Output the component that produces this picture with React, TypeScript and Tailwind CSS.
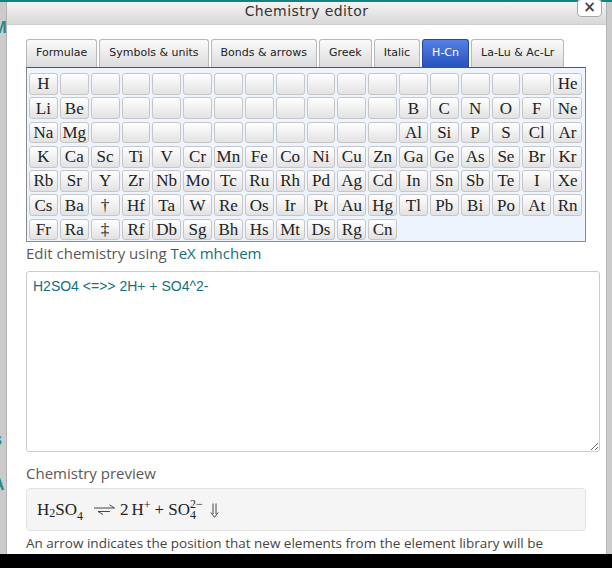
import React from 'react';

const tabs = ['Formulae', 'Symbols & units', 'Bonds & arrows', 'Greek', 'Italic', 'H-Cn', 'La-Lu & Ac-Lr'];

const blank = (n: number) => Array(n).fill('');
const none = (n: number) => Array(n).fill(null);

// null = no button at all, '' = empty button
const rows: (string | null)[][] = [
  ['H', ...blank(16), 'He'],
  ['Li', 'Be', ...blank(10), 'B', 'C', 'N', 'O', 'F', 'Ne'],
  ['Na', 'Mg', ...blank(10), 'Al', 'Si', 'P', 'S', 'Cl', 'Ar'],
  ['K', 'Ca', 'Sc', 'Ti', 'V', 'Cr', 'Mn', 'Fe', 'Co', 'Ni', 'Cu', 'Zn', 'Ga', 'Ge', 'As', 'Se', 'Br', 'Kr'],
  ['Rb', 'Sr', 'Y', 'Zr', 'Nb', 'Mo', 'Tc', 'Ru', 'Rh', 'Pd', 'Ag', 'Cd', 'In', 'Sn', 'Sb', 'Te', 'I', 'Xe'],
  ['Cs', 'Ba', '†', 'Hf', 'Ta', 'W', 'Re', 'Os', 'Ir', 'Pt', 'Au', 'Hg', 'Tl', 'Pb', 'Bi', 'Po', 'At', 'Rn'],
  ['Fr', 'Ra', '‡', 'Rf', 'Db', 'Sg', 'Bh', 'Hs', 'Mt', 'Ds', 'Rg', 'Cn', ...none(6)],
];

function EqArrow() {
  return (
    <svg width="23" height="11" viewBox="0 0 23 11" className="mx-[4px] shrink-0" fill="none" stroke="#333" strokeWidth="0.9">
      <path d="M1 4 H21.5 M21.5 4 L16.5 0.8" />
      <path d="M5 7.5 H17 M5 7.5 L10 10.5" />
    </svg>
  );
}

// ⇓ drawn as in the math preview
function DownDouble() {
  return (
    <svg width="9" height="15" viewBox="0 0 9 15" className="ml-[7px] shrink-0 translate-y-[1px]" fill="none" stroke="#333" strokeWidth="0.9">
      <path d="M3 0.5 V11 M6 0.5 V11" />
      <path d="M0.8 9.5 L4.5 14.3 L8.2 9.5" />
    </svg>
  );
}

function ElementButton({ label }: { label: string | null }) {
  if (label === null) return <div />;
  return (
    <div className="h-[21.7px] rounded-[3px] border border-[#c6c6c6] bg-linear-to-b from-[#ffffff] to-[#e2e2e2] flex items-center justify-center text-[17px] leading-none text-[#222] font-['Liberation_Serif',serif]">
      {label}
    </div>
  );
}

export default function App() {
  return (
    <div className="w-[612px] h-[568px] overflow-hidden flex flex-col bg-[#cbcbcb] font-['Open_Sans',sans-serif]">
      <div className="h-[2px] bg-[#137f86]" />
      <div className="flex flex-1 min-h-0">
        {/* page behind the dialog */}
        <div className="w-[7px] border-r border-[#b3b3b3] overflow-hidden flex flex-col text-[#2a8a90] font-bold text-[16px] leading-[16px]">
          <span className="mt-[17px] -ml-[8px]">M</span>
          <span className="mt-[396px] -ml-[6px]">s</span>
          <span className="mt-[29px] -ml-[7px]">A</span>
        </div>

        <div className="relative flex-1 flex flex-col bg-white">
          <div className="h-[23px] shrink-0 bg-linear-to-b from-[#f4f4f4] to-[#d8d8d8] border-b border-[#cfcfcf] flex justify-center">
            <span className="text-[14px] leading-[18px] tracking-[0.4px] text-[#333] font-['DejaVu_Sans',sans-serif]">
              Chemistry editor
            </span>
          </div>
          <div className="absolute -top-[3px] right-[4px] w-[25px] h-[18px] rounded-[4px] border border-[#a9a9a9] bg-white flex items-end justify-center pb-[1px] text-[15px] leading-none font-bold text-[#444] font-['DejaVu_Sans',sans-serif]">
            ×
          </div>

          <div className="pl-[19px] pr-[6px] flex flex-col">
            <div className="mt-[14px] flex gap-[2px] font-['DejaVu_Sans',sans-serif] text-[11px]">
              {tabs.map((t) =>
                t === 'H-Cn' ? (
                  <div
                    key={t}
                    className="h-[28px] px-[9px] flex items-center rounded-t-[3px] border border-b-0 border-[#2546a6] bg-linear-to-b from-[#5481e3] to-[#2a52bd] text-white"
                  >
                    {t}
                  </div>
                ) : (
                  <div
                    key={t}
                    className="h-[28px] px-[9px] flex items-center rounded-t-[3px] border border-b-0 border-[#b8b8b8] bg-linear-to-b from-[#fbfbfb] to-[#dcdcdc] text-[#222]"
                  >
                    {t}
                  </div>
                )
              )}
            </div>

            <div className="w-[560px] border border-[#8a8a8a] border-t-[#4d5566] bg-[#edf4fe] pt-[5px] pl-[2px] pr-[3px] pb-[1px]">
              <div className="grid grid-cols-[repeat(18,minmax(0,1fr))] gap-x-[2px] gap-y-[2.6px]">
                {rows.flat().map((el, i) => (
                  <ElementButton key={i} label={el} />
                ))}
              </div>
            </div>

            <div className="mt-[1px] text-[15px] leading-[20px] text-[#595959]">
              Edit chemistry using <span className="text-[#0f6f77]">TeX mhchem</span>
            </div>

            <textarea
              readOnly
              value="H2SO4 <=>> 2H+ + SO4^2-"
              className="block mt-[7.5px] w-[574px] h-[181px] rounded-[3px] border border-[#cccccc] bg-white px-[6px] pt-[4px] text-[14px] leading-[20px] text-[#127179] font-['Liberation_Sans',sans-serif] outline-none"
            />

            <div className="mt-[11px] text-[15px] leading-[20px] text-[#595959]">Chemistry preview</div>

            <div className="mt-[5px] w-[560px] h-[43px] rounded-[4px] border border-[#e2e2e2] bg-[#f5f5f5] flex items-center pl-[10px] text-[17px] text-[#222] font-['Liberation_Serif',serif]">
              <span>H</span>
              <span className="text-[12px] translate-y-[4px]">2</span>
              <span>SO</span>
              <span className="text-[12px] translate-y-[7px]">4</span>
              <span className="w-[6px]" />
              <EqArrow />
              <span>2</span>
              <span className="w-[3px]" />
              <span>H</span>
              <span className="text-[12px] -translate-y-[4px]">+</span>
              <span className="mx-[4px]">+</span>
              <span>SO</span>
              <span className="inline-flex flex-col text-[12px] leading-[11px] translate-y-[1px]">
                <span>2−</span>
                <span>4</span>
              </span>
              <DownDouble />
            </div>

            <div className="mt-[2px] text-[13.5px] leading-[20px] text-[#444] whitespace-nowrap">
              An arrow indicates the position that new elements from the element library will be
            </div>
          </div>
        </div>

        <div className="w-[6px] border-l border-[#b3b3b3]" />
      </div>
      <div className="h-[14px] bg-black" />
    </div>
  );
}
